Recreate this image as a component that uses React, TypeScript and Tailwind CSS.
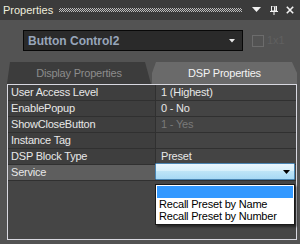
import React from "react";

const rows: { label: string; value: string; dim?: boolean; selected?: boolean }[] = [
  { label: "User Access Level", value: "1 (Highest)" },
  { label: "EnablePopup", value: "0 - No" },
  { label: "ShowCloseButton", value: "1 - Yes", dim: true },
  { label: "Instance Tag", value: "" },
  { label: "DSP Block Type", value: "Preset" },
  { label: "Service", value: "", selected: true },
];

export default function App() {
  return (
    <div
      className="w-[300px] h-[244px] bg-[#535353] flex flex-col overflow-hidden"
      style={{ fontFamily: '"Liberation Sans", Arial, sans-serif' }}
    >
      {/* Title bar */}
      <div className="h-[20px] bg-[#3b3b3b] flex items-center pl-[3px] pr-[6px] shrink-0">
        <span className="text-[11px] text-[#eeeedd] leading-none">Properties</span>
        <div className="flex-1 ml-[6px] mr-[10px] h-[4px] bg-[conic-gradient(#bdbdbd_25%,transparent_0_50%,#bdbdbd_0_75%,transparent_0)] bg-[length:2px_2px]" />
        <svg width="9" height="6" viewBox="0 0 9 6" className="mr-[9px]">
          <polygon points="0,0 9,0 4.5,5" fill="#f2f2f2" />
        </svg>
        <svg width="8" height="9" viewBox="0 0 8 9" className="mr-[8px]">
          <rect x="1.5" y="0" width="5" height="5" fill="none" stroke="#f2f2f2" strokeWidth="1" />
          <rect x="4" y="0.5" width="1.5" height="4.5" fill="#f2f2f2" />
          <rect x="0" y="5" width="8" height="1" fill="#f2f2f2" />
          <rect x="3.5" y="6" width="1" height="3" fill="#f2f2f2" />
        </svg>
        <svg width="8" height="8" viewBox="0 0 8 8">
          <path d="M0.8 0.8 L7.2 7.2 M7.2 0.8 L0.8 7.2" stroke="#f2f2f2" strokeWidth="1.6" />
        </svg>
      </div>

      {/* Control selector row */}
      <div className="flex items-center pl-[23px] mt-[10px] shrink-0">
        <div className="w-[220px] h-[21px] bg-[#2a2a2a] border border-[#080808] flex items-center justify-between pl-[4px] pr-[7px]">
          <span className="text-[12px] font-bold text-[#98a6ba] leading-none">Button Control2</span>
          <svg width="6" height="4" viewBox="0 0 6 4">
            <polygon points="0,0 6,0 3,3.5" fill="#e8e8e8" />
          </svg>
        </div>
        <div className="ml-[9px] w-[12px] h-[12px] border border-[#6c6c6c]" />
        <span className="ml-[3px] text-[11px] text-[#606060] leading-none">1x1</span>
      </div>

      {/* Tabs */}
      <div className="flex mt-[11px] ml-[7px] w-[290px] h-[22px] shrink-0">
        <div className="w-[144px] h-full bg-[#3c3c3c] [clip-path:polygon(3px_0,calc(100%-6px)_0,100%_100%,0_100%)] flex items-center justify-center">
          <span className="text-[11px] tracking-[-0.2px] text-[#8c8c8c] leading-none">Display Properties</span>
        </div>
        <div className="w-[145px] ml-[1px] h-full bg-[#6a6a6a] [clip-path:polygon(4px_0,calc(100%-5px)_0,100%_11px,100%_100%,0_100%,0_11px)] flex items-center justify-center">
          <span className="text-[11px] tracking-[-0.2px] text-[#f4f4f4] leading-none">DSP Properties</span>
        </div>
      </div>

      {/* Property grid */}
      <div className="ml-[7px] w-[290px] h-[156px] border border-[#d8d8e0] bg-[#454545] flex flex-col shrink-0">
        {rows.map((r) => (
          <div key={r.label} className="flex h-[16px] border-b border-[#303030] shrink-0">
            <div
              className={`w-[148px] border-r border-[#303030] flex items-center pl-[3px] text-[11px] tracking-[-0.2px] leading-none ${
                r.selected ? "bg-[#5e5e5e]" : "bg-[#3e3e3e]"
              } text-[#e8e8e8]`}
            >
              {r.label}
            </div>
            <div
              className={`relative flex-1 flex items-center pl-[5px] text-[11px] tracking-[-0.2px] leading-none bg-[#444444] ${
                r.dim ? "text-[#7a7a7a]" : "text-[#e8e8e8]"
              }`}
            >
              {r.value}
              {r.selected && (
                <>
                  <div className="absolute left-[-1px] right-[1px] top-[-2px] h-[17px] border border-[#4a86b4] rounded-[1px] bg-[linear-gradient(#eaf6fd,#d6effb_45%,#bde4f7_50%,#a7d9f5)] flex items-center justify-end pr-[4px]">
                    <svg width="7" height="4" viewBox="0 0 7 4">
                      <polygon points="0,0 7,0 3.5,4" fill="#000" />
                    </svg>
                  </div>
                  <div className="absolute left-[-1px] right-[1px] top-[19px] h-[41px] bg-white border border-[#1a1a1a] shadow-[2px_2px_2px_rgba(0,0,0,0.45)] flex flex-col py-[1px] z-10">
                    <div className="h-[13px] bg-[#3399ff] mx-[1px]" />
                    <div className="h-[13px] flex items-center pl-[3px] text-[11px] tracking-[-0.2px] text-black leading-none">
                      Recall Preset by Name
                    </div>
                    <div className="h-[13px] flex items-center pl-[3px] text-[11px] tracking-[-0.2px] text-black leading-none">
                      Recall Preset by Number
                    </div>
                  </div>
                </>
              )}
            </div>
          </div>
        ))}
        <div className="flex-1" />
      </div>
    </div>
  );
}
